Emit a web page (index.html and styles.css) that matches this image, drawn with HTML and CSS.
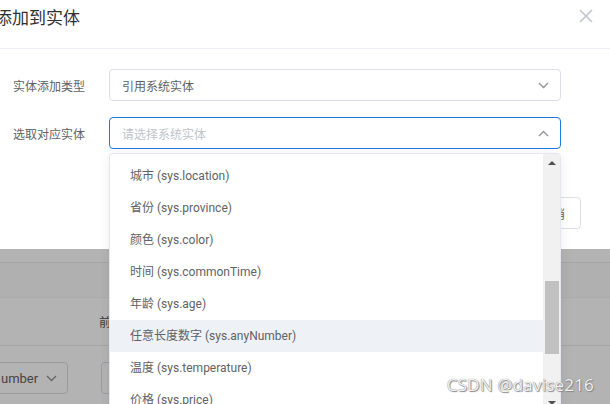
FILE: index.html
```html
<!DOCTYPE html>
<html lang="zh-CN">
<head>
<meta charset="utf-8">
<title>添加到实体</title>
<link rel="stylesheet" href="styles.css">
</head>
<body>
<div class="page">
  <div class="dialog">
    <div class="dlg-header">
      <span class="dlg-title">添加到实体</span>
      <svg class="close" width="14" height="14" viewBox="0 0 14 14"><path d="M1 1L13 13M13 1L1 13"/></svg>
    </div>
    <div class="dlg-body">
      <div class="form-row">
        <span class="form-label">实体添加类型</span>
        <div class="select">
          <span class="select-value">引用系统实体</span>
          <svg class="chev" width="11" height="7" viewBox="0 0 11 7"><path d="M1 1L5.5 5.5L10 1"/></svg>
        </div>
      </div>
      <div class="form-row">
        <span class="form-label">选取对应实体</span>
        <div class="select is-focus">
          <span class="select-placeholder">请选择系统实体</span>
          <svg class="chev" width="11" height="7" viewBox="0 0 11 7"><path d="M1 6L5.5 1.5L10 6"/></svg>
        </div>
      </div>
    </div>
    <div class="dlg-footer">
      <button class="btn">取消</button>
    </div>
  </div>

  <div class="backdrop">
    <div class="bd-band bd-top"></div>
    <div class="bd-band bd-head"></div>
    <div class="bd-band bd-row"><span class="bd-text">前</span></div>
    <div class="bd-controls">
      <div class="bd-select"><span>umber</span>
        <svg class="bd-chev" width="11" height="7" viewBox="0 0 11 7"><path d="M1 1L5.5 5.5L10 1"/></svg>
      </div>
      <div class="bd-input"></div>
    </div>
  </div>

  <div class="dropdown">
    <ul class="options">
      <li class="option">城市 (sys.location)</li>
      <li class="option">省份 (sys.province)</li>
      <li class="option">颜色 (sys.color)</li>
      <li class="option">时间 (sys.commonTime)</li>
      <li class="option">年龄 (sys.age)</li>
      <li class="option is-hover">任意长度数字 (sys.anyNumber)</li>
      <li class="option">温度 (sys.temperature)</li>
      <li class="option">价格 (sys.price)</li>
    </ul>
    <div class="scrollbar">
      <div class="sb-btn"><span class="tri-up"></span></div>
      <div class="sb-track"><div class="sb-thumb"></div></div>
      <div class="sb-btn"><span class="tri-down"></span></div>
    </div>
  </div>

  <div class="watermark">CSDN @davise216</div>
</div>
</body>
</html>
```

FILE: styles.css
```css
* { box-sizing: border-box; }
html, body { margin: 0; padding: 0; }
body {
  font-family: Roboto, "Noto Sans CJK SC", sans-serif;
  font-size: 12px;
  color: #606266;
  background: #fff;
}
.page {
  position: relative;
  width: 610px;
  height: 404px;
  overflow: hidden;
  display: flex;
  flex-direction: column;
}
.dialog {
  background: #fff;
  height: 249px;
  flex: none;
}
.dlg-header {
  height: 49px;
  border-bottom: 1px solid #ebeef5;
  display: flex;
  justify-content: space-between;
  align-items: flex-start;
  padding-right: 17px;
}
.dlg-title {
  margin-left: -5px;
  padding-top: 7px;
  font-size: 17px;
  line-height: 22px;
  color: #303133;
}
.close {
  margin-top: 9px;
  fill: none;
  stroke: #c0c4cc;
  stroke-width: 1.6;
}
.dlg-body {
  padding: 20px 49px 0 13px;
  display: flex;
  flex-direction: column;
  gap: 16px;
}
.form-row {
  display: flex;
  align-items: center;
}
.form-label {
  width: 96px;
  flex: none;
  color: #606266;
}
.select {
  flex: 1;
  height: 32px;
  border: 1px solid #dcdfe6;
  border-radius: 4px;
  display: flex;
  align-items: center;
  justify-content: space-between;
  padding: 0 11px 0 12px;
}
.select.is-focus { border-color: #1f7ae0; }
.select-value { color: #606266; }
.select-placeholder { color: #c0c4cc; }
.chev {
  fill: none;
  stroke: #909399;
  stroke-width: 1.3;
}
.dlg-footer {
  display: flex;
  justify-content: flex-end;
  padding: 48px 29px 20px;
}
.btn {
  height: 32px;
  padding: 0 15px;
  border: 1px solid #dcdfe6;
  border-radius: 4px;
  background: #fff;
  color: #606266;
  font: inherit;
}

.backdrop {
  flex: 1;
  background: #b3b3b3;
  display: flex;
  flex-direction: column;
}
.bd-band { border-bottom: 1px solid #a5a5a5; }
.bd-top { height: 14px; }
.bd-head { height: 35px; background: #b0b0b0; border-bottom-color: #ababab; }
.bd-row {
  height: 48px;
  display: flex;
  align-items: center;
  padding-left: 99px;
}
.bd-text { color: #3e3f41; }
.bd-controls {
  display: flex;
  gap: 33px;
  padding-top: 16px;
}
.bd-select {
  margin-left: -4px;
  width: 72px;
  height: 32px;
  border: 1px solid #9a9b9d;
  border-radius: 4px;
  display: flex;
  align-items: center;
  justify-content: space-between;
  padding: 0 10px 0 4px;
  color: #434446;
  font-size: 13px;
}
.bd-chev {
  fill: none;
  stroke: #656565;
  stroke-width: 1.3;
}
.bd-input {
  width: 60px;
  height: 32px;
  border: 1px solid #9a9b9d;
  border-radius: 4px;
}

.dropdown {
  position: absolute;
  left: 109px;
  top: 153px;
  width: 452px;
  height: 259px;
  background: #fff;
  border: 1px solid #e4e7ed;
  border-radius: 4px;
  box-shadow: 0 2px 12px rgba(0, 0, 0, 0.08);
  display: flex;
  overflow: hidden;
}
.options {
  list-style: none;
  margin: 0;
  padding: 6px 0 0;
  flex: 1;
}
.option {
  height: 32px;
  line-height: 32px;
  padding-left: 20px;
  color: #606266;
  font-size: 12px;
}
.option.is-hover { background: #eef1f6; }
.scrollbar {
  width: 17px;
  flex: none;
  background: #f1f1f1;
  display: flex;
  flex-direction: column;
}
.sb-btn {
  height: 17px;
  display: flex;
  align-items: center;
  justify-content: center;
}
.tri-up, .tri-down {
  width: 0;
  height: 0;
  border-left: 4px solid transparent;
  border-right: 4px solid transparent;
}
.tri-up { border-bottom: 4px solid #505050; }
.tri-down { border-top: 4px solid #505050; }
.sb-track {
  flex: 1;
  padding: 110px 1px 0 2px;
}
.sb-thumb {
  height: 73px;
  background: #c1c1c1;
}

.watermark {
  position: absolute;
  right: 16px;
  bottom: 8px;
  font-family: "Open Sans", "Noto Sans", sans-serif;
  font-size: 17px;
  color: #f2f2f2;
  text-shadow: 0 0 1px #6a6a6a, 1px 1px 1px #8a8a8a;
  letter-spacing: 0.2px;
}
```
